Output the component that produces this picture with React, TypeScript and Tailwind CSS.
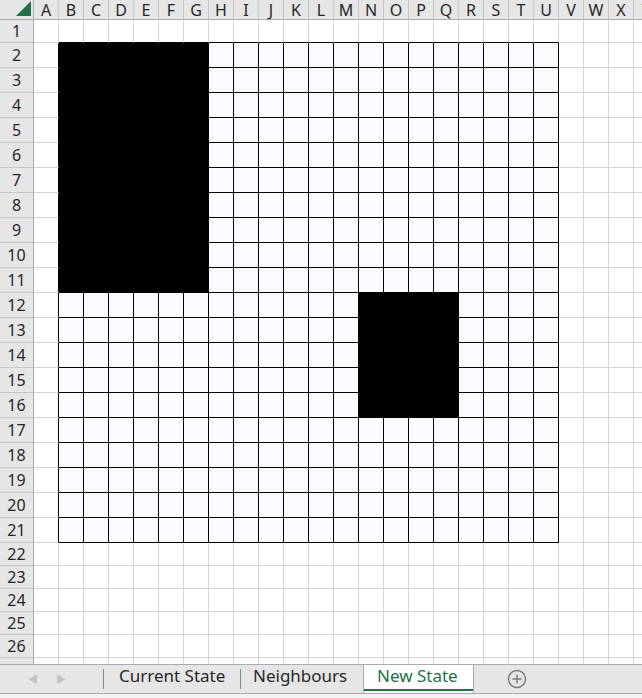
import React from "react";

const COLS = "ABCDEFGHIJKLMNOPQRSTUVWXY".split("");

// row heights include the 1px gridline
const ROWS = Array.from({ length: 27 }, (_, i) => i + 1);
const rowHeight = (r: number) => (r >= 2 && r <= 21 ? "h-[25px]" : "h-[23px]");

const isFilled = (r: number, c: number) =>
  (r >= 2 && r <= 11 && c >= 2 && c <= 7) || (r >= 12 && r <= 16 && c >= 14 && c <= 17);

const inBoard = (r: number, c: number) => r >= 2 && r <= 21 && c >= 2 && c <= 21;

function Cell({ r, c }: { r: number; c: number }) {
  const rightBlack = r >= 2 && r <= 21 && c >= 1 && c <= 21;
  const bottomBlack = r >= 1 && r <= 21 && c >= 2 && c <= 21;
  const bg = isFilled(r, c) ? "bg-black" : inBoard(r, c) ? "bg-[#fafaff]" : "bg-white";
  return (
    <div
      className={`w-[25px] shrink-0 border-r border-b ${rightBlack ? "border-r-black" : "border-r-[#d4d4d4]"} ${
        bottomBlack ? "border-b-black" : "border-b-[#d4d4d4]"
      } ${bg}`}
    />
  );
}

function SheetTabs() {
  return (
    <div className="flex h-[30px] shrink-0 items-stretch border-y border-[#ababab] bg-[#e6e6e6] text-[17px] leading-[20px] text-[#262626]">
      <div className="flex w-[103px] items-center">
        <span className="ml-[28px] text-[10px] text-[#c2c2c2]">◀</span>
        <span className="ml-[18px] text-[10px] text-[#c2c2c2]">▶</span>
      </div>
      <div className="my-auto h-[20px] w-px bg-[#8c8c8c]" />
      <div className="flex w-[136px] items-center pb-[6px] pl-[15px]">Current State</div>
      <div className="my-auto h-[20px] w-px bg-[#8c8c8c]" />
      <div className="flex w-[122px] items-center pb-[6px] pl-[12px]">Neighbours</div>
      <div className="-mt-px flex w-[111px] flex-col border-x border-t border-[#ababab] bg-white">
        <div className="flex flex-1 items-center pb-[3px] pl-[13px] text-[#217346]">New State</div>
        <div className="mb-[2px] h-[2px] bg-[#217346]" />
      </div>
      <div className="flex items-center pl-[33px]">
        <svg width="20" height="20" viewBox="0 0 20 20" fill="none" stroke="#7a7a7a" strokeWidth="1.4">
          <circle cx="10" cy="10" r="8.5" />
          <path d="M10 5.5v9M5.5 10h9" />
        </svg>
      </div>
    </div>
  );
}

export default function App() {
  return (
    <div
      className="flex h-[698px] w-[642px] flex-col overflow-hidden bg-white"
      style={{ fontFamily: '"Noto Sans", "Noto Sans CJK SC", sans-serif' }}
    >
      <div className="h-[664px] shrink-0 overflow-hidden">
        {/* column headers */}
        <div className="flex h-[20px] bg-[#e6e6e6]">
          <div className="relative w-[34px] shrink-0 border-r border-b border-[#ababab]">
            <svg className="absolute right-[2px] top-[1px]" width="15" height="15" viewBox="0 0 15 15">
              <polygon points="15,0 15,15 0,15" fill="#217346" />
            </svg>
          </div>
          {COLS.map((c) => (
            <div
              key={c}
              className="flex w-[25px] shrink-0 items-center justify-center border-r border-b border-r-[#c6c6c6] border-b-[#ababab] text-[16px] leading-none text-[#262626]"
            >
              {c}
            </div>
          ))}
        </div>
        {ROWS.map((r) => (
          <div key={r} className={`flex ${rowHeight(r)}`}>
            <div className="flex w-[34px] shrink-0 items-center justify-center border-r border-b border-r-[#ababab] border-b-[#c6c6c6] bg-[#e6e6e6] text-[16px] leading-none text-[#262626]">
              {r < 27 ? r : null}
            </div>
            {COLS.map((_, i) => (
              <Cell key={i} r={r} c={i + 1} />
            ))}
          </div>
        ))}
      </div>
      <SheetTabs />
      <div className="flex-1 bg-[#f3f3f3]" />
    </div>
  );
}
